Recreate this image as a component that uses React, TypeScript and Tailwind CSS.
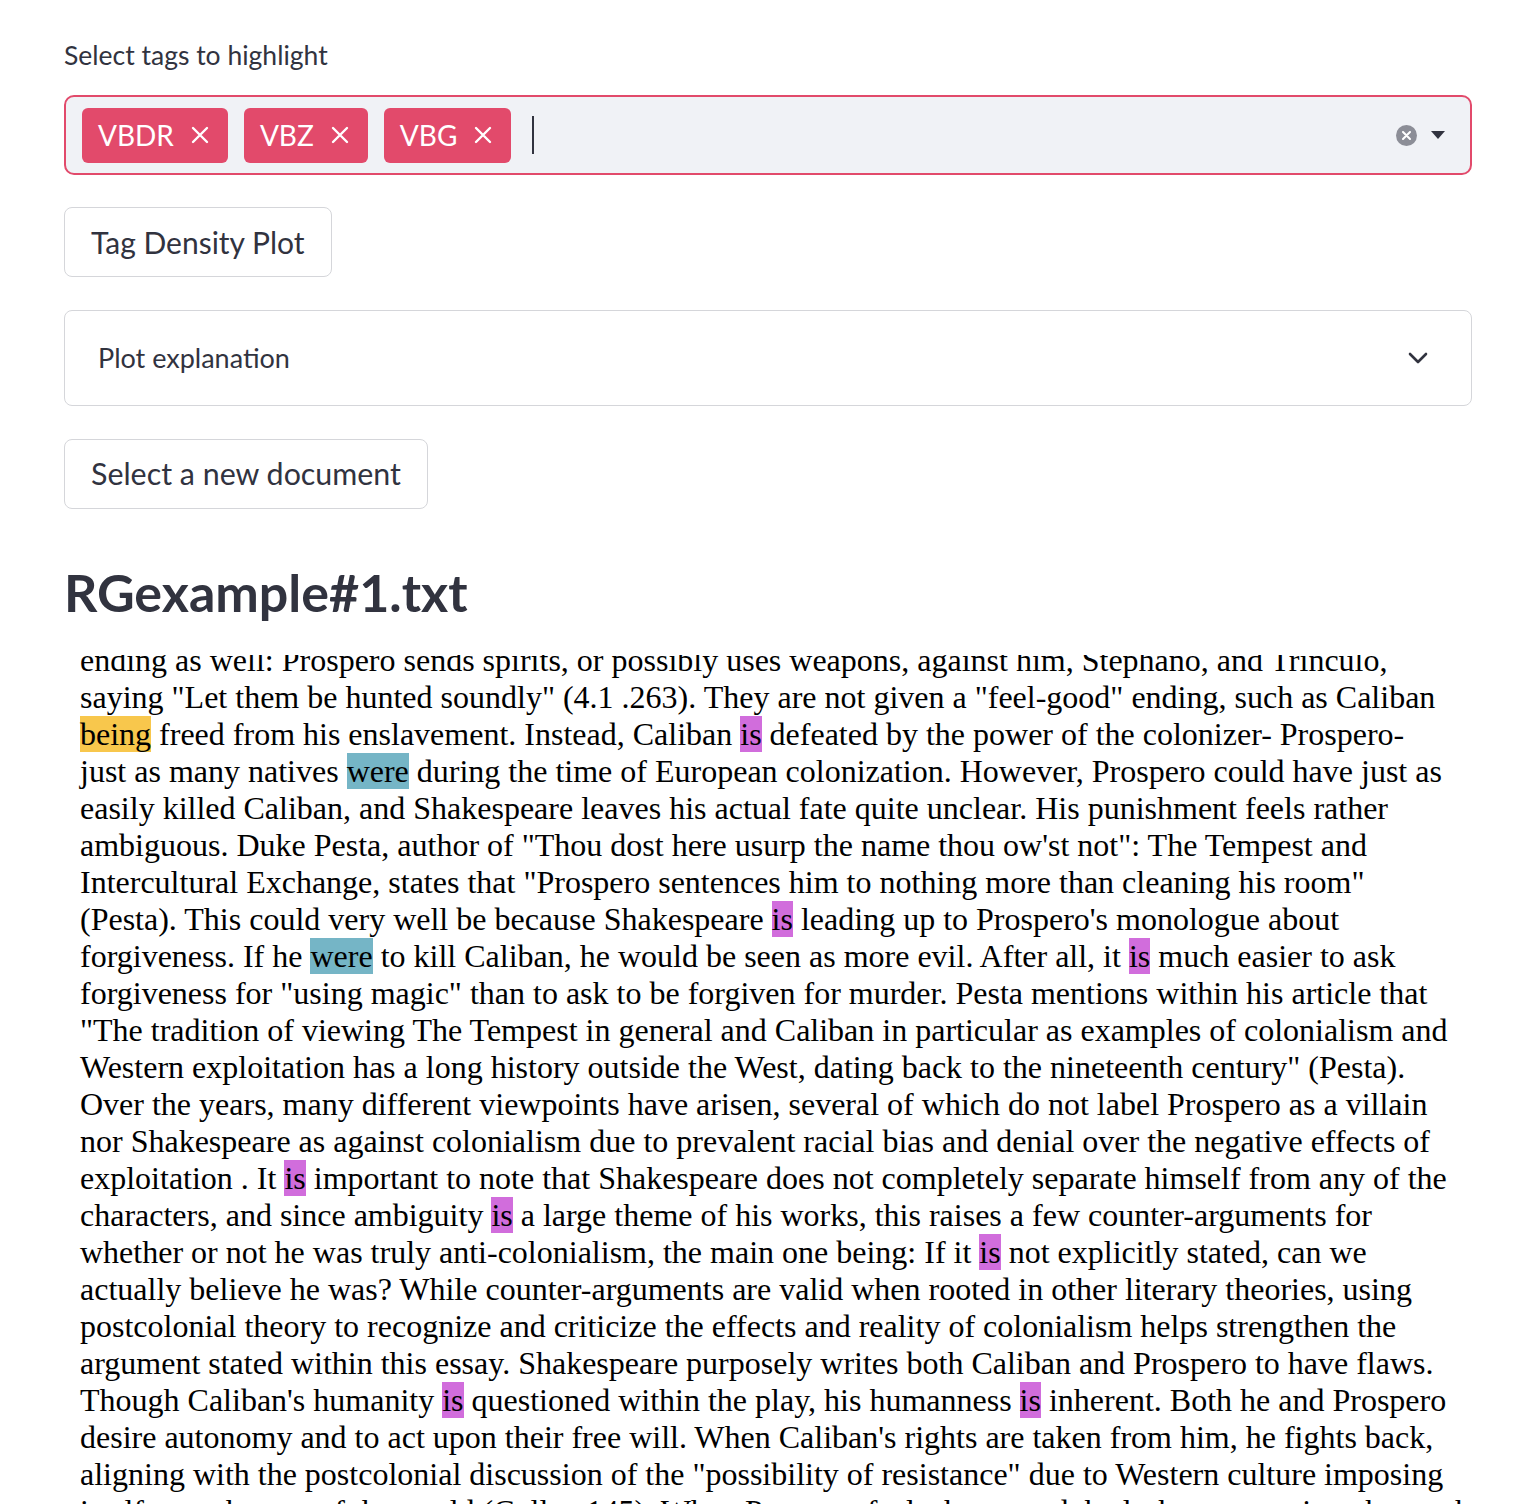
type Tag = 'VBG' | 'VBZ' | 'VBDR';

const HL: Record<Tag, string> = {
  VBG: 'bg-[#f8c74c]',
  VBZ: 'bg-[#d16ddc]',
  VBDR: 'bg-[#75b5c6]',
};

// each line of the document, with [word|TAG] marking highlighted tokens
const LINES = [
  'ending as well: Prospero sends spirits, or possibly uses weapons, against him, Stephano, and Trinculo,',
  'saying "Let them be hunted soundly" (4.1 .263). They are not given a "feel-good" ending, such as Caliban',
  '[being|VBG] freed from his enslavement. Instead, Caliban [is|VBZ] defeated by the power of the colonizer- Prospero-',
  'just as many natives [were|VBDR] during the time of European colonization. However, Prospero could have just as',
  'easily killed Caliban, and Shakespeare leaves his actual fate quite unclear. His punishment feels rather',
  'ambiguous. Duke Pesta, author of "Thou dost here usurp the name thou ow\'st not": The Tempest and',
  'Intercultural Exchange, states that "Prospero sentences him to nothing more than cleaning his room"',
  "(Pesta). This could very well be because Shakespeare [is|VBZ] leading up to Prospero's monologue about",
  'forgiveness. If he [were|VBDR] to kill Caliban, he would be seen as more evil. After all, it [is|VBZ] much easier to ask',
  'forgiveness for "using magic" than to ask to be forgiven for murder. Pesta mentions within his article that',
  '"The tradition of viewing The Tempest in general and Caliban in particular as examples of colonialism and',
  'Western exploitation has a long history outside the West, dating back to the nineteenth century" (Pesta).',
  'Over the years, many different viewpoints have arisen, several of which do not label Prospero as a villain',
  'nor Shakespeare as against colonialism due to prevalent racial bias and denial over the negative effects of',
  'exploitation . It [is|VBZ] important to note that Shakespeare does not completely separate himself from any of the',
  'characters, and since ambiguity [is|VBZ] a large theme of his works, this raises a few counter-arguments for',
  'whether or not he was truly anti-colonialism, the main one being: If it [is|VBZ] not explicitly stated, can we',
  'actually believe he was? While counter-arguments are valid when rooted in other literary theories, using',
  'postcolonial theory to recognize and criticize the effects and reality of colonialism helps strengthen the',
  'argument stated within this essay. Shakespeare purposely writes both Caliban and Prospero to have flaws.',
  "Though Caliban's humanity [is|VBZ] questioned within the play, his humanness [is|VBZ] inherent. Both he and Prospero",
  "desire autonomy and to act upon their free will. When Caliban's rights are taken from him, he fights back,",
  'aligning with the postcolonial discussion of the "possibility of resistance" due to Western culture imposing',
  'itself onto the rest of the world (Cullen 145). When Prospero feels threatened, he lashes out against those who',
];

function Line({ text }: { text: string }) {
  const parts = text.split(/(\[[^\]]+\])/);
  return (
    <div className="whitespace-pre">
      {parts.map((p, i) => {
        const m = p.match(/^\[(.+)\|(\w+)\]$/);
        if (!m) return <span key={i}>{p}</span>;
        return (
          <span key={i} className={HL[m[2] as Tag]}>
            {m[1]}
          </span>
        );
      })}
    </div>
  );
}

function Chip({ label }: { label: string }) {
  return (
    <div className="flex h-[55px] items-center gap-[17px] rounded-[6px] bg-[#e24a6b] pl-4 pr-[19px] text-[28px] text-white">
      <span>{label}</span>
      <svg width="18" height="18" viewBox="0 0 18 18" className="shrink-0">
        <path d="M2 2 L16 16 M16 2 L2 16" stroke="white" strokeWidth="2.4" strokeLinecap="round" />
      </svg>
    </div>
  );
}

export default function App() {
  return (
    <div className="min-h-screen bg-white px-16 pt-[36px] font-['Lato',sans-serif] text-[#31333f]">
      <p className="text-[26.5px] leading-[38px]">Select tags to highlight</p>

      <div className="mt-[21px] flex h-[80px] items-center rounded-[10px] border-2 border-[#e24a6b] bg-[#f0f2f6] pl-4 pr-[25px]">
        <div className="flex items-center gap-4">
          <Chip label="VBDR" />
          <Chip label="VBZ" />
          <Chip label="VBG" />
        </div>
        <div className="ml-[21px] h-[38px] w-[2px] bg-[#31333f]" />
        <div className="ml-auto flex items-center gap-[14px]">
          <div className="flex h-[21px] w-[21px] items-center justify-center rounded-full bg-[#8c8e97]">
            <svg width="9" height="9" viewBox="0 0 9 9">
              <path d="M1 1 L8 8 M8 1 L1 8" stroke="white" strokeWidth="2" strokeLinecap="round" />
            </svg>
          </div>
          <svg width="14" height="8" viewBox="0 0 14 8">
            <path d="M0 0 L14 0 L7 8 Z" fill="#31333f" />
          </svg>
        </div>
      </div>

      <button className="mt-[32px] flex h-[70px] items-center rounded-[8px] border border-[#d5d6da] px-[26px] text-[30px]">
        Tag Density Plot
      </button>

      <div className="mt-[33px] flex h-[96px] items-center justify-between rounded-[8px] border border-[#d5d6da] pl-[33px] pr-[43px]">
        <span className="text-[27px]">Plot explanation</span>
        <svg width="20" height="12" viewBox="0 0 20 12">
          <path d="M2 2 L10 10 L18 2" fill="none" stroke="#31333f" strokeWidth="2.6" strokeLinecap="round" strokeLinejoin="round" />
        </svg>
      </div>

      <button className="mt-[33px] flex h-[70px] items-center rounded-[8px] border border-[#d5d6da] px-[26px] text-[30.4px]">
        Select a new document
      </button>

      <h1 className="mt-[53px] text-[52px] font-bold leading-[60px]">RGexample#1.txt</h1>

      <div className="mt-[33px] h-[849px] overflow-hidden">
        <div className="-mt-[13px] pl-4 font-['Liberation_Serif',serif] text-[32px] leading-[37px] text-black">
          {LINES.map((l, i) => (
            <Line key={i} text={l} />
          ))}
        </div>
      </div>
    </div>
  );
}
